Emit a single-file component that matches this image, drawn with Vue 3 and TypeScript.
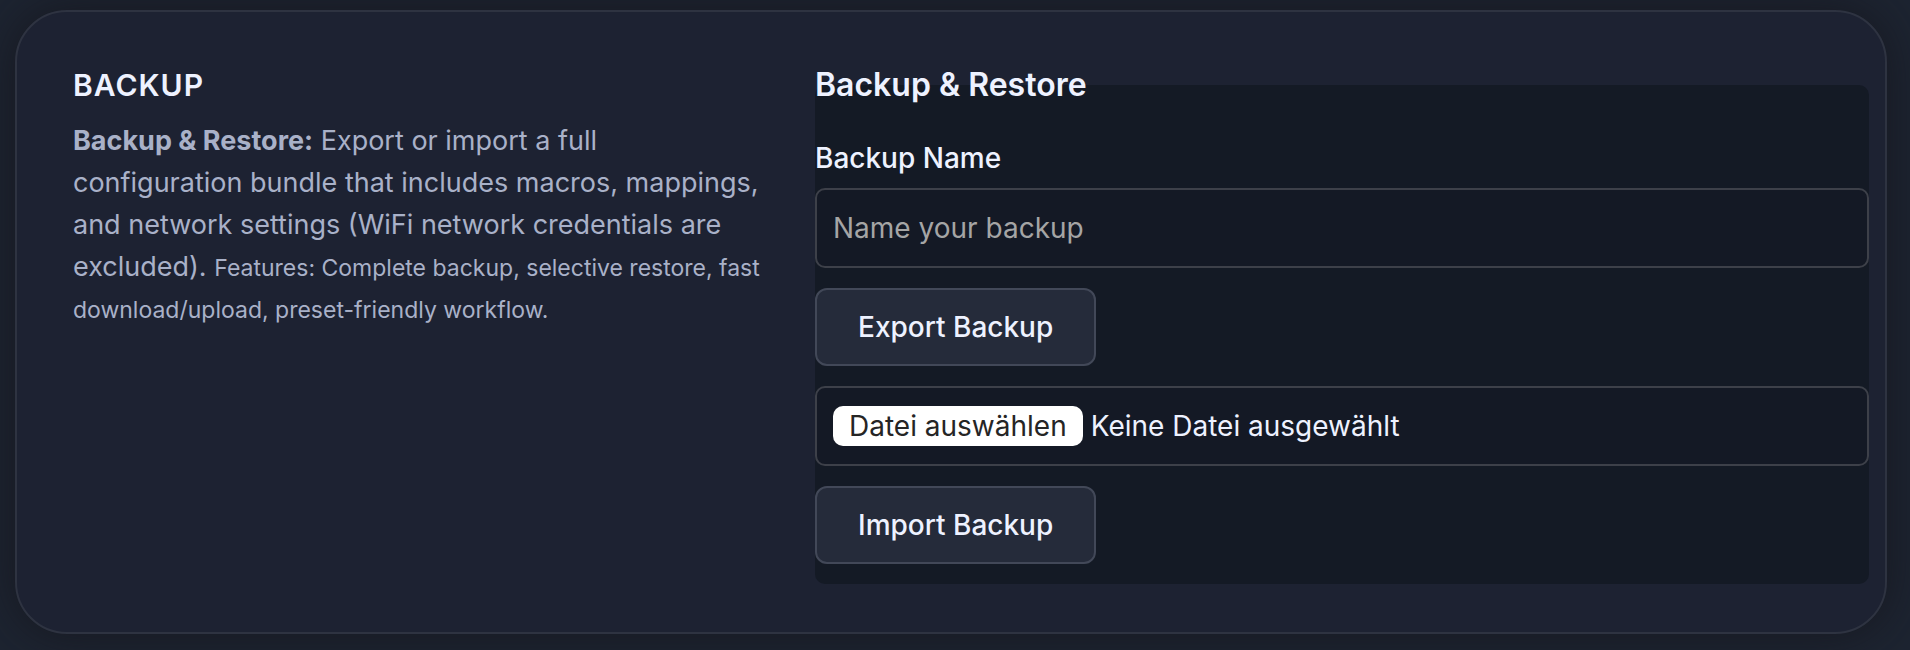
<script setup lang="ts">
import { computed, ref } from 'vue'

const backupName = ref('')
const selectedFile = ref<File | null>(null)
const fileStatus = computed(() => selectedFile.value?.name ?? 'Keine Datei ausgewählt')

function onFileChange(event: Event) {
  selectedFile.value = (event.target as HTMLInputElement).files?.[0] ?? null
}
</script>

<template>
  <main class="page">
    <section class="card">
      <div class="intro">
        <h2 class="title">BACKUP</h2>
        <p class="description">
          <strong>Backup &amp; Restore:</strong> Export or import a full configuration bundle that
          includes macros, mappings, and network settings (WiFi network credentials are excluded).
          <small>Features: Complete backup, selective restore, fast download/upload, preset-friendly workflow.</small>
        </p>
      </div>

      <fieldset class="panel">
        <legend>Backup &amp; Restore</legend>
        <label class="field-label" for="backup-name">Backup Name</label>
        <input id="backup-name" v-model="backupName" class="field" type="text" placeholder="Name your backup" />
        <button class="action" type="button">Export Backup</button>
        <label class="field file" for="backup-file">
          <input id="backup-file" class="file-input" type="file" @change="onFileChange" />
          <span class="file-button">Datei auswählen</span>
          <span>{{ fileStatus }}</span>
        </label>
        <button class="action" type="button">Import Backup</button>
      </fieldset>
    </section>
  </main>
</template>

<style>
body {
  margin: 0;
  background: #1d2431;
}
</style>

<style scoped>
.page {
  box-sizing: border-box;
  min-height: 100vh;
  padding: 10px 23px 16px 15px;
  overflow: hidden;
  font-family: Inter, "Liberation Sans", sans-serif;
  font-size: 28px;
  color: #eef2ff;
}

.card {
  box-sizing: border-box;
  display: grid;
  grid-template-columns: 692fr 1054fr;
  gap: 50px;
  padding: 52px 16px 48px 56px;
  border: 2px solid #2e3341;
  border-radius: 52px;
  background: #1d2232;
  box-shadow: 0 0 48px rgba(20, 18, 24, 0.7);
}

.title {
  margin: 0 0 14px;
  font-size: 30px;
  font-weight: 600;
  line-height: 42px;
  letter-spacing: 1px;
}

.description {
  margin: 0;
  font-size: 27px;
  line-height: 42px;
  color: #a9b1c8;
}

.description small {
  font-size: 23px;
  line-height: 1;
}

.panel {
  display: flex;
  flex-direction: column;
  align-items: flex-start;
  min-width: 0;
  margin: 0;
  padding: 0 0 20px;
  border: 0;
  border-radius: 10px;
  background: #141a25;
}

.panel legend {
  padding: 0;
  font-size: 32px;
  font-weight: 600;
  line-height: 42px;
}

.field-label {
  margin: 32px 0 10px;
  font-weight: 500;
  line-height: 40px;
}

.field {
  box-sizing: border-box;
  width: 100%;
  height: 80px;
  margin: 0 0 20px;
  padding: 0 16px;
  border: 2px solid #3d4049;
  border-radius: 10px;
  outline: 0;
  background: #141925;
  color: inherit;
  font: inherit;
}

.field::placeholder {
  color: #a5a5a5;
  opacity: 1;
}

.file {
  display: flex;
  align-items: center;
  gap: 8px;
  cursor: pointer;
}

.file-input {
  position: absolute;
  width: 1px;
  height: 1px;
  margin: 0;
  opacity: 0;
}

.file-button {
  padding: 0 16px;
  border-radius: 10px;
  background: #fff;
  color: #252525;
  line-height: 40px;
}

.action {
  height: 78px;
  padding: 0 41px;
  border: 2px solid #424858;
  border-radius: 12px;
  background: #252b3a;
  color: inherit;
  font: inherit;
  font-weight: 500;
  cursor: pointer;
}

.action + .field {
  margin-top: 20px;
}

.field:focus-visible,
.file:focus-within,
.action:focus-visible {
  border-color: #7381a8;
}
</style>
